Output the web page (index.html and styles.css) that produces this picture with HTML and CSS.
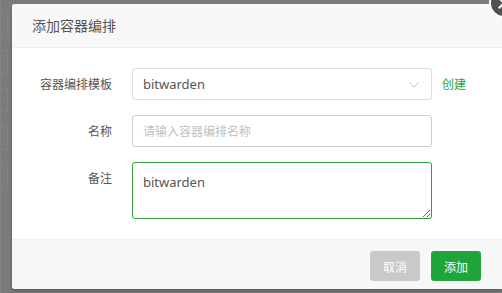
FILE: index.html
```html
<!DOCTYPE html>
<html lang="zh-CN">

<head>
    <meta charset="UTF-8">
    <meta name="viewport" content="width=device-width, initial-scale=1.0">
    <title>添加容器编排</title>
    <link rel="stylesheet" href="styles.css">
</head>

<body>

    <div class="backdrop">
        <div class="page-strip">
            <div class="strip-box"></div>
            <div class="strip-box"></div>
            <div class="strip-box"></div>
            <div class="strip-box"></div>
            <div class="strip-box"></div>
        </div>

        <div class="dialog">
            <div class="dialog-title">添加容器编排</div>

            <div class="dialog-body">
                <div class="form-row">
                    <label class="form-label">容器编排模板</label>
                    <div class="select-box">
                        <span>bitwarden</span>
                        <svg class="chevron" width="12" height="7" viewBox="0 0 12 7">
                            <path d="M1 1 L6 6 L11 1" fill="none" stroke="#c4c4c4" stroke-width="1"/>
                        </svg>
                    </div>
                    <a class="create-link">创建</a>
                </div>

                <div class="form-row">
                    <label class="form-label">名称</label>
                    <input class="text-input" type="text" placeholder="请输入容器编排名称">
                </div>

                <div class="form-row">
                    <label class="form-label">备注</label>
                    <textarea class="text-area">bitwarden</textarea>
                </div>
            </div>

            <div class="dialog-footer">
                <button class="btn btn-cancel">取消</button>
                <button class="btn btn-add">添加</button>
            </div>

            <span class="close-btn">
                <svg width="30" height="30" viewBox="0 0 30 30">
                    <path d="M9 9 L21 21 M21 9 L9 21" stroke="#fff" stroke-width="2.4"/>
                </svg>
            </span>
        </div>
    </div>

</body>

</html>
```

FILE: styles.css
```css
* {
    box-sizing: border-box;
}

body {
    margin: 0;
    font-family: "Noto Sans CJK SC", "Noto Sans", sans-serif;
    overflow: hidden;
}

.backdrop {
    position: relative;
    display: flex;
    height: 293px;
    background: #7b7b7b;
}

.page-strip {
    width: 12px;
    padding-top: 12px;
    display: flex;
    flex-direction: column;
    gap: 14px;
    border-left: 1px solid #838383;
}

.strip-box {
    width: 7px;
    height: 24px;
    border: 1px solid #848484;
    border-left: none;
    border-radius: 0 3px 3px 0;
}

.dialog {
    position: relative;
    margin-top: 4px;
    width: 492px;
    height: 285px;
    background: #fff;
    border-radius: 3px 0 0 3px;
    display: flex;
    flex-direction: column;
    box-shadow: 0 2px 3px rgba(0, 0, 0, 0.25);
}

.dialog-title {
    height: 44px;
    padding-left: 20px;
    line-height: 43px;
    font-size: 14px;
    color: #555;
    background: #f8f8f8;
    border-bottom: 1px solid #eee;
    border-radius: 3px 0 0 0;
}

.dialog-body {
    flex: 1;
    padding-top: 20px;
    display: flex;
    flex-direction: column;
    gap: 15px;
}

.form-row {
    display: flex;
    align-items: flex-start;
}

.form-label {
    width: 120px;
    padding-right: 20px;
    text-align: right;
    font-size: 12px;
    line-height: 32px;
    color: #555;
}

.select-box,
.text-input,
.text-area {
    width: 300px;
    border: 1px solid #ddd;
    border-radius: 3px;
    font-family: "Noto Sans", sans-serif;
    font-size: 13px;
    color: #555;
    background: #fff;
}

.select-box {
    height: 32px;
    padding: 0 10px;
    display: flex;
    align-items: center;
    justify-content: space-between;
}

.chevron {
    margin-right: 1px;
}

.create-link {
    margin-left: 10px;
    font-size: 12px;
    line-height: 32px;
    color: #20a53a;
}

.text-input {
    height: 32px;
    padding: 0 10px;
    border-color: #ccc;
    outline: none;
}

.text-input::placeholder {
    color: #c0c0c0;
    font-family: "Noto Sans CJK SC", sans-serif;
    font-size: 12px;
}

.text-area {
    height: 57px;
    padding: 8px 10px;
    line-height: 22px;
    border-color: #2f9d3d;
    outline: none;
    resize: vertical;
}

.dialog-footer {
    height: 50px;
    padding: 11px 21px 0 0;
    display: flex;
    justify-content: flex-end;
    gap: 11px;
    background: #f6f8f8;
    border-top: 1px solid #eee;
    border-radius: 0 0 0 3px;
}

.btn {
    width: 50px;
    height: 30px;
    border: none;
    border-radius: 3px;
    font-family: "Noto Sans CJK SC", sans-serif;
    font-size: 12px;
    color: #fff;
}

.btn-cancel {
    background: #c9c9c9;
}

.btn-add {
    background: #20a53a;
}

.close-btn {
    position: absolute;
    top: -16px;
    right: -17px;
    width: 30px;
    height: 30px;
    border-radius: 50%;
    background: #505050;
    border: 2px solid #fff;
    display: flex;
    align-items: center;
    justify-content: center;
}
```
